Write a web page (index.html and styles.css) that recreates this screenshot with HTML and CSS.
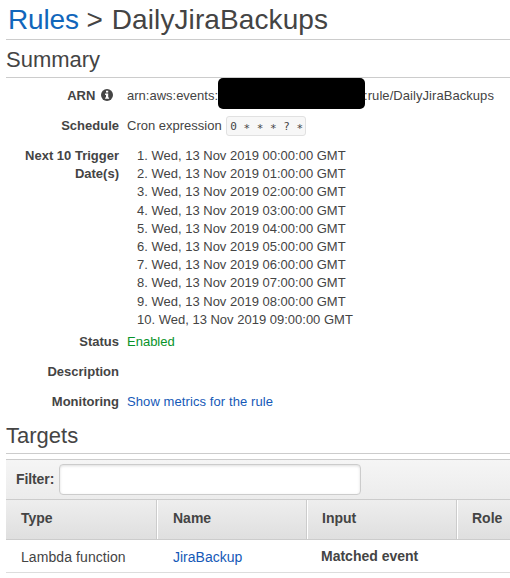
FILE: index.html
```html
<!DOCTYPE html>
<html lang="en">
<head>
<meta charset="utf-8">
<title>DailyJiraBackups</title>
<link rel="stylesheet" href="styles.css">
</head>
<body>
<main>
  <h1><a href="#">Rules</a> &gt; <span class="rule-name">DailyJiraBackups</span></h1>
  <h2 class="summary-title">Summary</h2>
  <dl class="details">
    <dt>ARN <svg class="info" viewBox="0 0 12 12" aria-hidden="true"><circle cx="6" cy="6" r="6"/><path d="M5 1.8h2.2v1.7H5zM4.1 4.6h3.1v3.8h.9v1.3h-4V8.4H5V5.9h-.9z"/></svg></dt>
    <dd class="arn"><span>arn:aws:events:</span><span class="redacted"></span><span class="arn-end">:rule/DailyJiraBackups</span></dd>
    <dt>Schedule</dt>
    <dd>Cron expression <code>0 <span class="star">* * *</span> ? <span class="star">*</span></code></dd>
    <dt>Next 10 Trigger Date(s)</dt>
    <dd>
      <ol>
        <li>1. Wed, 13 Nov 2019 00:00:00 GMT</li>
        <li>2. Wed, 13 Nov 2019 01:00:00 GMT</li>
        <li>3. Wed, 13 Nov 2019 02:00:00 GMT</li>
        <li>4. Wed, 13 Nov 2019 03:00:00 GMT</li>
        <li>5. Wed, 13 Nov 2019 04:00:00 GMT</li>
        <li>6. Wed, 13 Nov 2019 05:00:00 GMT</li>
        <li>7. Wed, 13 Nov 2019 06:00:00 GMT</li>
        <li>8. Wed, 13 Nov 2019 07:00:00 GMT</li>
        <li>9. Wed, 13 Nov 2019 08:00:00 GMT</li>
        <li>10. Wed, 13 Nov 2019 09:00:00 GMT</li>
      </ol>
    </dd>
    <dt>Status</dt>
    <dd class="enabled">Enabled</dd>
    <dt>Description</dt>
    <dd></dd>
    <dt>Monitoring</dt>
    <dd><a class="metrics" href="#">Show metrics for the rule</a></dd>
  </dl>
  <h2 class="targets-title">Targets</h2>
  <section class="targets">
    <div class="filter"><label for="filter">Filter:</label><input id="filter" type="text"></div>
    <table>
      <thead><tr><th class="type">Type</th><th class="name">Name</th><th class="input">Input</th><th>Role</th></tr></thead>
      <tbody><tr><td>Lambda function</td><td class="target"><a href="#">JiraBackup</a></td><td class="matched">Matched event</td><td></td></tr></tbody>
    </table>
  </section>
</main>
</body>
</html>
```
FILE: styles.css
```css
* { box-sizing: border-box; }
body {
  margin: 0;
  background: #fff;
  color: #444;
  font: 13px/18.2px "Liberation Sans", Arial, sans-serif;
  overflow: hidden;
}
main { margin-left: 6px; height: 578px; }
a { color: #1559b7; text-decoration: none; }
h1, h2 { margin: 0; font-weight: 400; border-bottom: 1px solid #ccc; }
h1 { height: 40px; padding-left: 2px; font-size: 28px; line-height: 39px; }
h1 a { color: #1166bb; letter-spacing: -0.15px; }
.rule-name { margin-left: 1px; letter-spacing: 0.1px; }
h2 { height: 38px; font-size: 22px; line-height: 39px; }
.details {
  display: grid;
  grid-template-columns: 113px 1fr;
  grid-template-rows: 30px 30px 186px 30px 30px 30px;
  column-gap: 8px;
  margin: 0;
  padding-top: 9px;
  height: 342px;
}
dt { font-weight: 700; text-align: right; }
dd { margin: 0; white-space: nowrap; }
.info { width: 12px; height: 12px; margin: 0 6px 0 2px; vertical-align: -1px; fill: #444; }
.info path { fill: #fff; }
.arn { display: flex; }
.redacted { width: 147px; height: 31px; margin-top: -9px; background: #000; border-radius: 5px; }
.arn-end { margin-left: -1px; letter-spacing: 0.06px; }
code {
  display: inline-block;
  width: 80px;
  height: 20px;
  margin: -2px 0 0 1px;
  padding: 0 3px;
  border: 1px solid #e1e1e1;
  border-radius: 3px;
  background: #f7f7f7;
  font: 11px/19px "DejaVu Sans Mono", monospace;
  vertical-align: 0;
}
.star { line-height: 1; vertical-align: -2px; }
ol { margin: 0; padding: 0 0 0 10px; list-style: none; }
.enabled { color: #079329; }
.metrics { letter-spacing: 0.09px; }
.targets-title { height: 34px; line-height: 32px; }
.targets { margin-top: 5px; border-top: 1px solid #ccc; font-size: 14px; }
.filter {
  display: flex;
  align-items: center;
  height: 39px;
  padding-left: 10px;
  background: linear-gradient(#f5f5f5, #ececec);
  font-weight: 700;
}
.filter label { width: 38px; white-space: nowrap; letter-spacing: -0.1px; }
.filter input {
  width: 302px;
  height: 31px;
  margin-left: 5px;
  border: 1px solid #ccc;
  border-radius: 4px;
  background: #fff;
  box-shadow: inset 0 1px 3px #ddd;
}
table { width: 504px; table-layout: fixed; border-collapse: separate; border-spacing: 0; }
th, td { padding: 0 0 0 15px; text-align: left; }
th {
  height: 41px;
  padding-bottom: 3px;
  border: solid #ccc;
  border-width: 1px 1px 1px 0;
  background: linear-gradient(#eee, #dfdfdf);
}
th + th { box-shadow: inset 1px 0 #fff; }
th:last-child { border-right: 0; }
.type { width: 151px; }
.name { width: 150px; padding-left: 16px; }
.input { width: 150px; }
td { height: 33px; padding-top: 2px; border-bottom: 1px solid #ddd; }
td:first-child { letter-spacing: 0.08px; }
.target { padding-left: 16px; }
.matched { padding: 1px 0 0 14px; font-weight: 700; }
```
